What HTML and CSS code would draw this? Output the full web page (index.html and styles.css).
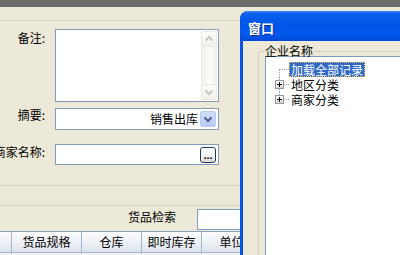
FILE: index.html
```html
<!DOCTYPE html>
<html lang="zh-CN">
<head>
<meta charset="utf-8">
<title>销售出库</title>
<link rel="stylesheet" href="styles.css">
</head>
<body>
<div class="screen">
  <div class="page">
    <div class="topbar"></div>
    <div class="toolbar"></div>
    <div class="form">
      <div class="row">
        <div class="lbl lbl-note">备注:</div>
        <div class="memo">
          <div class="vscroll">
            <div class="sbtn"><svg width="14" height="14" viewBox="0 0 14 14"><path d="M3.5 8.5 L7 5 L10.5 8.5" fill="none" stroke="#c8c7bd" stroke-width="2"/></svg></div>
            <div class="track"></div>
            <div class="sbtn"><svg width="14" height="14" viewBox="0 0 14 14"><path d="M3.5 5.5 L7 9 L10.5 5.5" fill="none" stroke="#c8c7bd" stroke-width="2"/></svg></div>
          </div>
        </div>
      </div>
      <div class="row row-sum">
        <div class="lbl lbl-sum">摘要:</div>
        <div class="combo">
          <span class="combo-val">销售出库</span>
          <span class="drop"><svg width="14" height="14" viewBox="0 0 14 14"><path d="M3.5 5.5 L7 9 L10.5 5.5" fill="none" stroke="#4d6185" stroke-width="2"/></svg></span>
        </div>
      </div>
      <div class="row row-vendor">
        <div class="lbl lbl-vendor">商家名称:</div>
        <div class="picker">
          <span class="dots">...</span>
        </div>
      </div>
    </div>
    <div class="strip"></div>
    <div class="search">
      <span class="search-lbl">货品检索</span>
      <div class="search-box"></div>
    </div>
    <div class="thead">
      <div class="th c0"></div>
      <div class="th c1">货品规格</div>
      <div class="th c2">仓库</div>
      <div class="th c3">即时库存</div>
      <div class="th c4">单位</div>
    </div>
    <div class="tbody">
      <div class="td c0"></div>
      <div class="td c1"></div>
      <div class="td c2"></div>
      <div class="td c3"></div>
      <div class="td c4"></div>
    </div>
  </div>

  <div class="win">
    <div class="titlebar"><span class="title">窗口</span></div>
    <div class="client">
      <fieldset class="group">
        <legend class="group-lbl">企业名称</legend>
        <div class="tree">
          <div class="node first">
            <span class="gutter"></span>
            <span class="sel">加载全部记录</span>
          </div>
          <div class="node mid">
            <span class="gutter"><span class="pbox"><svg width="7" height="7" viewBox="0 0 7 7"><path d="M1 3.5h5M3.5 1v5" stroke="#000" stroke-width="1"/></svg></span></span>
            <span class="txt">地区分类</span>
          </div>
          <div class="node last">
            <span class="gutter"><span class="pbox"><svg width="7" height="7" viewBox="0 0 7 7"><path d="M1 3.5h5M3.5 1v5" stroke="#000" stroke-width="1"/></svg></span></span>
            <span class="txt">商家分类</span>
          </div>
        </div>
      </fieldset>
    </div>
  </div>
</div>
</body>
</html>
```

FILE: styles.css
```css
html, body {
  margin: 0;
  padding: 0;
}
body {
  width: 400px;
  height: 255px;
  overflow: hidden;
  background: #ece9d8;
  font-family: "Noto Sans CJK SC", "Noto Sans", sans-serif;
  font-size: 12px;
  line-height: 14px;
  color: #000;
}
.screen {
  position: relative;
  width: 400px;
  height: 255px;
  overflow: hidden;
}
.page {
  width: 400px;
}
.topbar {
  height: 7px;
  background: #6b6b6b;
}
.toolbar {
  height: 13px;
}
.form {
  height: 165px;
  box-sizing: border-box;
  border-top: 1px solid #d2cfbd;
  padding-top: 8px;
  display: flex;
  flex-direction: column;
}
.row {
  display: flex;
  column-gap: 10px;
}
.row-sum {
  margin-top: 6px;
}
.row-vendor {
  margin-top: 14px;
}
.lbl {
  width: 45px;
  flex: none;
  display: flex;
  justify-content: flex-end;
  white-space: nowrap;
}
.lbl-note { padding-top: 2px; }
.lbl-sum { padding-top: 0; }
.lbl-vendor { padding-top: 1px; }

.memo {
  width: 164px;
  height: 73px;
  box-sizing: border-box;
  border: 1px solid #7f9db9;
  background: #fff;
  padding: 1px;
  display: flex;
  justify-content: flex-end;
}
.vscroll {
  width: 16px;
  display: flex;
  flex-direction: column;
}
.sbtn {
  width: 16px;
  height: 16px;
  box-sizing: border-box;
  border: 1px solid #e9e8e0;
  border-radius: 2px;
  background: linear-gradient(to bottom, #fbfbf8, #f1f0ea);
  display: flex;
  align-items: center;
  justify-content: center;
  flex: none;
}
.track {
  flex: 1;
  background: linear-gradient(to right, #f0efe8, #fdfdfb 55%, #efeee7);
}

.combo, .picker {
  width: 164px;
  box-sizing: border-box;
  border: 1px solid #7f9db9;
  background: #fff;
  display: flex;
  align-items: center;
  justify-content: flex-end;
  padding-right: 2px;
}
.combo {
  height: 22px;
}
.picker {
  height: 21px;
}
.combo-val {
  margin-right: 2px;
}
.drop {
  width: 16px;
  height: 16px;
  box-sizing: border-box;
  border: 1px solid #b9cbf3;
  border-radius: 2px;
  background: linear-gradient(to bottom, #d0dcfb, #b7c9f6);
  display: flex;
  align-items: center;
  justify-content: center;
}
.dots {
  width: 16px;
  height: 16px;
  box-sizing: border-box;
  border: 1px solid #1d3c66;
  border-radius: 3px;
  background: linear-gradient(to bottom, #ffffff, #f2f1ec 70%, #d9d5c9);
  font-family: "Liberation Sans", sans-serif;
  font-weight: bold;
  font-size: 11px;
  line-height: 11px;
  letter-spacing: 0;
  display: flex;
  align-items: flex-end;
  justify-content: center;
  padding-bottom: 1px;
}

.strip {
  height: 19px;
  border-top: 1px solid #d2cfbd;
}
.search {
  height: 26px;
  box-sizing: border-box;
  border-top: 1px solid #d2cfbd;
  display: flex;
  align-items: flex-start;
  padding-left: 128px;
  column-gap: 21px;
}
.search-lbl {
  margin-top: 4px;
  white-space: nowrap;
}
.search-box {
  margin-top: 3px;
  width: 120px;
  height: 21px;
  box-sizing: border-box;
  border: 1px solid #7f9db9;
  background: #fff;
}

.thead, .tbody {
  display: flex;
}
.thead {
  height: 22px;
  box-sizing: border-box;
  border-top: 1px solid #8ba2bf;
  border-bottom: 1px solid #a7b8cd;
  background: linear-gradient(to bottom, #fdfdfe, #eef1f6 50%, #dde3ec);
}
.th, .td {
  box-sizing: border-box;
  border-right: 1px solid #a3b5cb;
  flex: none;
  text-align: center;
  white-space: nowrap;
}
.th {
  line-height: 20px;
}
.c0 { width: 12px; }
.c1 { width: 70px; }
.c2 { width: 60px; }
.c3 { width: 60px; }
.c4 { width: 60px; }
.tbody {
  height: 10px;
  background: #f4f3ee;
}
.td {
  border-right-color: #d8d7cf;
}

/* window */
.win {
  position: absolute;
  left: 240px;
  top: 11px;
  width: 180px;
  height: 260px;
  background: linear-gradient(to right, #0a4fe0, #0a5cf2 2px, #0242d4 3px);
  border-radius: 8px 8px 0 0;
  display: flex;
  flex-direction: column;
  overflow: hidden;
}
.titlebar {
  height: 30px;
  flex: none;
  box-sizing: border-box;
  padding: 9px 0 0 8px;
  background: linear-gradient(to bottom, #3b88f6 0, #0a60ec 3px, #0056e6 45%, #0058ec 80%, #0048d8 100%);
}
.title {
  color: #fff;
  font-weight: bold;
  font-size: 13px;
  line-height: 15px;
  letter-spacing: 0;
  text-shadow: 1px 1px 0 #0b2a8e;
}
.client {
  flex: 1;
  margin-left: 3px;
  background: #ece9d8;
  padding: 3px 0 0 15px;
}
.group {
  margin: 0;
  padding: 0 0 0 6px;
  border: 1px solid #d0d0bf;
  border-radius: 3px;
  width: 200px;
  height: 300px;
  box-sizing: border-box;
  min-width: 0;
}
.group-lbl {
  padding: 0 1px;
  margin-left: -1px;
  line-height: 14px;
  white-space: nowrap;
}
.tree {
  margin-top: -2px;
  border: 1px solid #7f9db9;
  background: #fff;
  height: 260px;
  padding: 5px 0 0 9px;
}
.node {
  display: flex;
  align-items: center;
  height: 15px;
  line-height: 13px;
  white-space: nowrap;
}
.gutter {
  position: relative;
  width: 14px;
  height: 15px;
  flex: none;
  display: flex;
  align-items: center;
}
.gutter::before {
  content: "";
  position: absolute;
  left: 4px;
  width: 0;
  border-left: 1px dotted #a0a0a0;
}
.gutter::after {
  content: "";
  position: absolute;
  top: 7px;
  height: 0;
  border-top: 1px dotted #a0a0a0;
}
.first .gutter::before { top: 7px; bottom: 0; }
.first .gutter::after { left: 5px; right: 0; }
.mid .gutter::before { top: 0; bottom: 0; }
.mid .gutter::after { left: 9px; right: 0; }
.last .gutter::before { top: 0; height: 3px; }
.last .gutter::after { left: 9px; right: 0; }
.pbox {
  position: relative;
  z-index: 1;
  width: 9px;
  height: 9px;
  box-sizing: border-box;
  border: 1px solid #8e9ca8;
  background: linear-gradient(to bottom, #ffffff, #d9d6cc);
  display: flex;
}
.sel {
  display: block;
  background: #316ac5;
  color: #fff;
  border: 1px dotted #e8c060;
  padding: 0 1px;
  line-height: 13px;
  height: 13px;
}
.txt {
  display: block;
  padding-left: 2px;
  height: 13px;
  line-height: 13px;
}
```
